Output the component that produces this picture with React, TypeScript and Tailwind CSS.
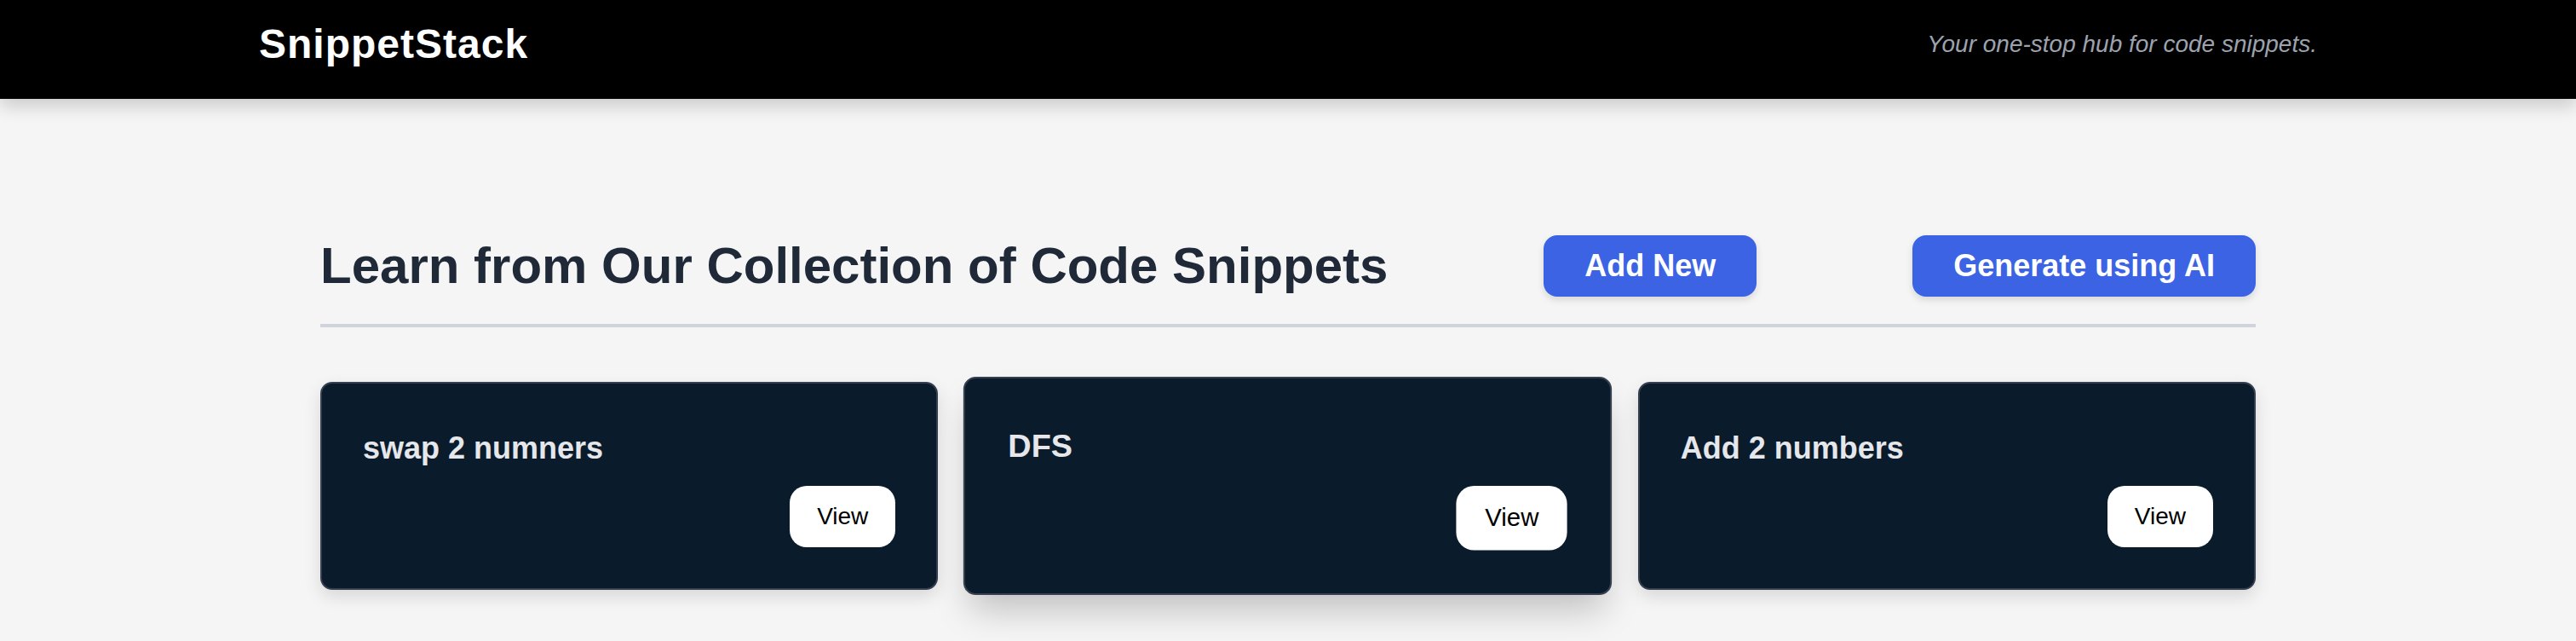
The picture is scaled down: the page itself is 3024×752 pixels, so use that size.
import React from "react";

const snippets = [
  { id: 1, title: "swap 2 numners", hovered: false },
  { id: 2, title: "DFS", hovered: true },
  { id: 3, title: "Add 2 numbers", hovered: false },
];

/* ─── Snippet card ────────────────────────────────────────────────────────── */
function SnippetCard({ title, hovered }: { title: string; hovered: boolean }) {
  return (
    <div
      className={`bg-[#0a1b2c] border-2 border-[#363f4f] rounded-[14px] p-[48px] flex flex-col ${
        hovered ? "scale-105 shadow-[0_24px_40px_-8px_rgba(0,0,0,0.22)]" : "shadow-[0_8px_20px_rgba(0,0,0,0.12)]"
      }`}
    >
      <h3 className="text-[#e5e7eb] text-[36px] leading-[56px] font-bold">{title}</h3>
      <div className="flex justify-end mt-[16px]">
        <button className="bg-white text-black text-[28px] leading-[40px] px-[32px] py-[16px] rounded-[20px]">
          View
        </button>
      </div>
    </div>
  );
}

/* ─── Page ────────────────────────────────────────────────────────────────── */
export default function App() {
  return (
    <div className="min-h-screen bg-[#f5f5f5] font-['Liberation_Sans',Arial,sans-serif]">
      {/* Header */}
      <header className="bg-black h-[116px] pt-[20px] shadow-[0_8px_20px_rgba(0,0,0,0.18)] relative z-10">
        <div className="w-[2560px] mx-auto px-[72px] flex items-center justify-between h-[64px]">
          <h1 className="text-white text-[48px] leading-[64px] font-bold tracking-[1px]">SnippetStack</h1>
          <p className="text-[#9ca3af] text-[28px] leading-[40px] italic">Your one-stop hub for code snippets.</p>
        </div>
      </header>

      {/* Main */}
      <main className="w-[2272px] mx-auto pt-[160px] pb-[64px]">
        <div className="flex items-center justify-between pb-[32px] border-b-4 border-[#d1d5db] mb-[64px]">
          <h2 className="text-[#1f2937] text-[60px] leading-[72px] font-bold">
            Learn from Our Collection of Code Snippets
          </h2>
          <button className="bg-[#3b63e3] text-white text-[36px] leading-[56px] font-bold px-[48px] py-[8px] rounded-[16px] shadow-[0_4px_8px_rgba(0,0,0,0.12)]">
            Add New
          </button>
          <button className="bg-[#3b63e3] text-white text-[36px] leading-[56px] font-bold px-[48px] py-[8px] rounded-[16px] shadow-[0_4px_8px_rgba(0,0,0,0.12)]">
            Generate using AI
          </button>
        </div>

        <div className="grid grid-cols-3 gap-[48px]">
          {snippets.map((s) => (
            <SnippetCard key={s.id} title={s.title} hovered={s.hovered} />
          ))}
        </div>
      </main>
    </div>
  );
}
